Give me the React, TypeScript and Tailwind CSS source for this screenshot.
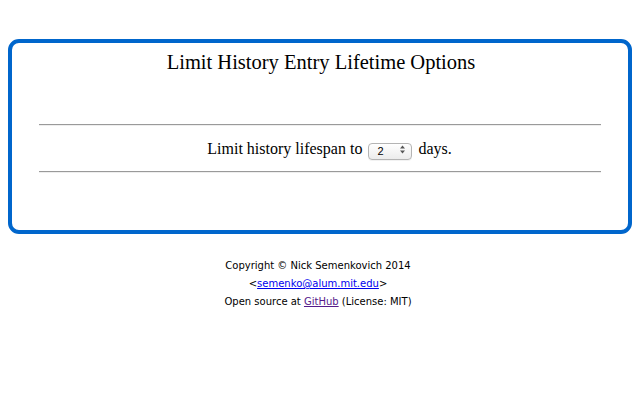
export default function App() {
  return (
    <div className="min-h-[400px] bg-white px-2 pt-[39px] text-black">
      <div className="rounded-[11px] border-4 border-[#0066cc] pt-2 pb-[57px]" style={{ fontFamily: '"Liberation Serif", serif' }}>
        <h1 className="pl-[2px] text-center text-[20.5px] leading-[23px]">Limit History Entry Lifetime Options</h1>

        <div className="mx-[27px] mt-[50px] h-[2px] border-t border-b border-t-[#9a9a9a] border-b-[#eeeeee]" />

        <div className="flex h-[45px] items-center justify-center pl-[19px] text-[16px] leading-[18px]">
          <span>Limit history lifespan to</span>
          <div className="relative mx-[6px] mt-[1px] h-[17px] w-[44px]">
            <select
              defaultValue="2"
              className="h-full w-full appearance-none rounded-[4px] border border-[#b4b4b4] bg-gradient-to-b from-white to-[#ececec] pl-[8px] text-[11px] leading-[15px] text-black shadow-[0_1px_0_rgba(0,0,0,0.05)]"
              style={{ fontFamily: '"Liberation Sans", Arial, sans-serif' }}
            >
              <option value="1">1</option>
              <option value="2">2</option>
              <option value="3">3</option>
              <option value="7">7</option>
              <option value="14">14</option>
              <option value="30">30</option>
            </select>
            <svg className="pointer-events-none absolute right-[7px] top-[4px]" width="5" height="9" viewBox="0 0 5 9">
              <path d="M0 3.5 L2.5 0.5 L5 3.5 Z" fill="#555" />
              <path d="M0 5.5 L2.5 8.5 L5 5.5 Z" fill="#555" />
            </svg>
          </div>
          <span>days.</span>
        </div>

        <div className="mx-[27px] h-[2px] border-t border-b border-t-[#9a9a9a] border-b-[#eeeeee]" />
      </div>

      <div
        className="mt-[23px] pr-[4px] text-center text-[10px] leading-[18px]"
        style={{ fontFamily: '"DejaVu Sans", Verdana, sans-serif' }}
      >
        <p>Copyright © Nick Semenkovich 2014</p>
        <p>
          &lt;<a href="#" className="text-[#0000ee] underline">semenko@alum.mit.edu</a>&gt;
        </p>
        <p>
          Open source at <a href="#" className="text-[#551a8b] underline">GitHub</a> (License: MIT)
        </p>
      </div>
    </div>
  );
}
